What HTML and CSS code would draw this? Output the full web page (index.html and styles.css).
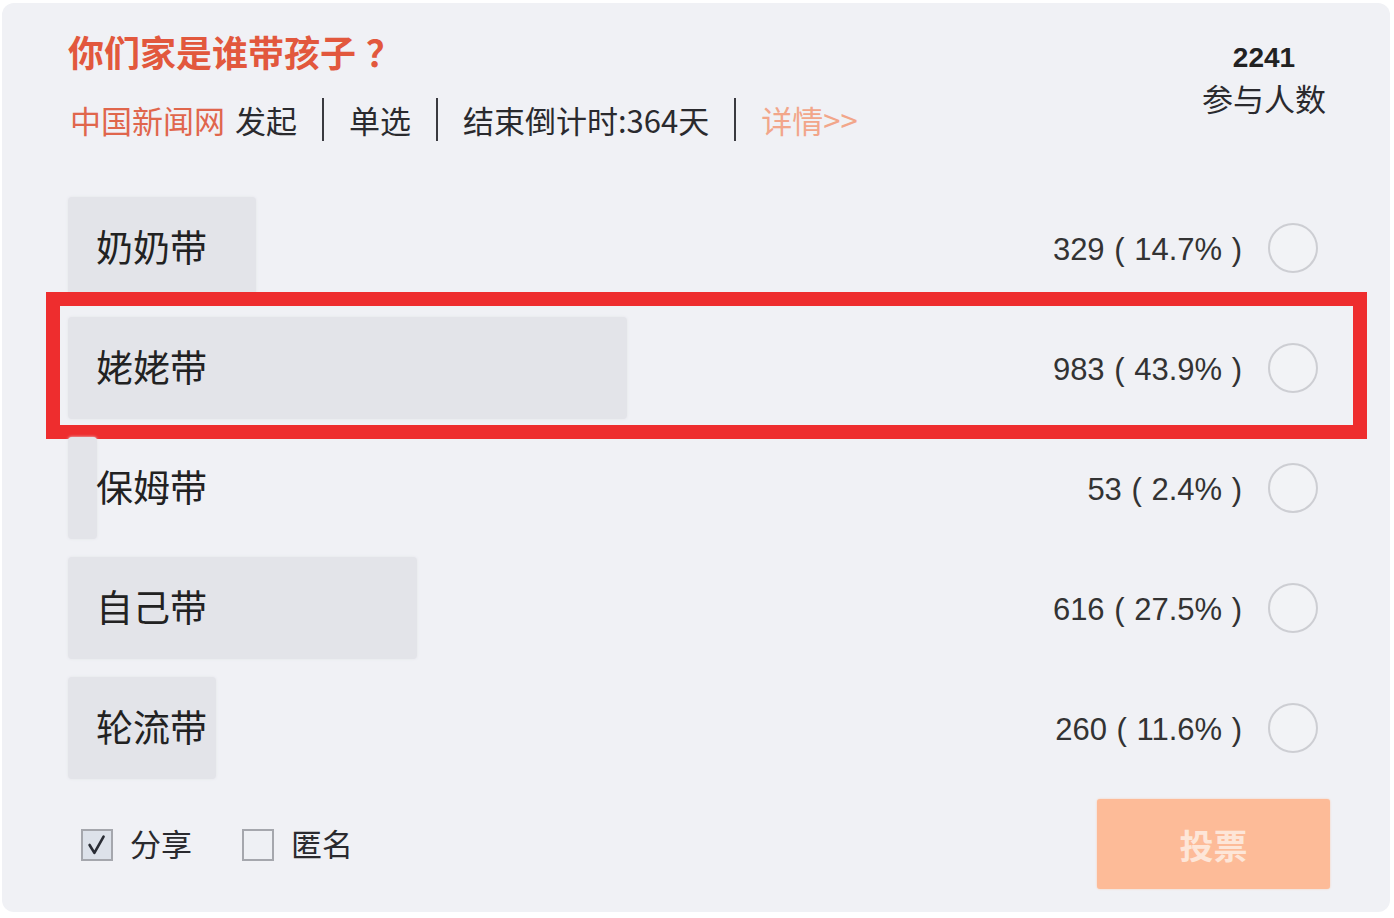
FILE: index.html
```html
<!DOCTYPE html>
<html lang="zh-CN">
<head>
<meta charset="utf-8">
<title>你们家是谁带孩子？</title>
<link rel="stylesheet" href="styles.css">
</head>
<body>
<div class="card">
  <header class="head">
    <div class="head-main">
      <h1 class="title">你们家是谁带孩子<span class="qmark">？</span></h1>
      <div class="meta">
        <span class="src">中国新闻网</span><span class="launch">发起</span>
        <span class="sep"></span>
        <span class="item">单选</span>
        <span class="sep"></span>
        <span class="item">结束倒计时:364天</span>
        <span class="sep"></span>
        <span class="more">详情&gt;&gt;</span>
      </div>
    </div>
    <div class="stats">
      <div class="count">2241</div>
      <div class="count-label">参与人数</div>
    </div>
  </header>

  <ul class="options">
    <li class="opt">
      <div class="bar" style="width:188px"></div>
      <span class="label">奶奶带</span>
      <span class="num">329 ( 14.7% )</span>
      <span class="radio"></span>
    </li>
    <li class="opt">
      <div class="bar" style="width:559px"></div>
      <span class="label">姥姥带</span>
      <span class="num">983 ( 43.9% )</span>
      <span class="radio"></span>
      <div class="mark"></div>
    </li>
    <li class="opt">
      <div class="bar" style="width:29px"></div>
      <span class="label">保姆带</span>
      <span class="num">53 ( 2.4% )</span>
      <span class="radio"></span>
    </li>
    <li class="opt">
      <div class="bar" style="width:349px"></div>
      <span class="label">自己带</span>
      <span class="num">616 ( 27.5% )</span>
      <span class="radio"></span>
    </li>
    <li class="opt">
      <div class="bar" style="width:148px"></div>
      <span class="label">轮流带</span>
      <span class="num">260 ( 11.6% )</span>
      <span class="radio"></span>
    </li>
  </ul>

  <footer class="foot">
    <label class="check">
      <span class="box checked">
        <svg viewBox="0 0 32 32" width="32" height="32"><path d="M7.5 16 L13 25 L23.5 6.5" fill="none" stroke="#2a2d35" stroke-width="3" stroke-linecap="round" stroke-linejoin="round"/></svg>
      </span>
      <span class="check-text">分享</span>
    </label>
    <label class="check">
      <span class="box"></span>
      <span class="check-text">匿名</span>
    </label>
    <button class="vote">投票</button>
  </footer>
</div>
</body>
</html>
```

FILE: styles.css
```css
* { box-sizing: border-box; }
html, body { margin: 0; padding: 0; }
body {
  background: #ffffff;
  width: 1394px;
  height: 918px;
  overflow: hidden;
  font-family: "Liberation Sans", "Noto Sans CJK SC", sans-serif;
  color: #222;
}
.card {
  margin: 3px 4px 6px 2px;
  height: 909px;
  background: #f0f1f5;
  border-radius: 12px;
  padding: 26px 72px 0 66px;
  display: flex;
  flex-direction: column;
}
.head {
  display: flex;
  justify-content: space-between;
  align-items: flex-start;
}
.head-main { display: flex; flex-direction: column; }
.title {
  margin: 0;
  font-size: 36px;
  line-height: 44px;
  font-weight: bold;
  color: #e2583d;
  font-family: "Noto Sans CJK SC", sans-serif;
}
.qmark {
  font-family: "Noto Sans CJK TC", "Noto Sans CJK SC", sans-serif;
  margin-left: 10px;
}
.meta {
  margin-top: 24px;
  display: flex;
  align-items: center;
  height: 44px;
  font-size: 31px;
  font-family: "Noto Sans CJK SC", sans-serif;
  color: #2a2a2e;
}
.src { color: #e0664c; margin-left: 2px; }
.launch { margin-left: 10px; }
.sep {
  width: 2px;
  height: 43px;
  background: #3a3a40;
  margin: 0 25px;
}
.more { color: #f2a68a; }
.stats {
  margin-top: 11px;
  margin-right: -11px;
  display: flex;
  flex-direction: column;
  align-items: center;
  width: 130px;
}
.count {
  font-size: 28px;
  line-height: 36px;
  font-weight: bold;
  color: #222;
  font-family: "Liberation Sans", sans-serif;
}
.count-label {
  font-size: 31px;
  line-height: 44px;
  color: #2a2a2e;
  font-family: "Noto Sans CJK SC", sans-serif;
}
.options {
  list-style: none;
  margin: 56px 0 0 0;
  padding: 0;
  display: flex;
  flex-direction: column;
  gap: 18px;
}
.opt {
  position: relative;
  height: 102px;
  display: flex;
  align-items: center;
  padding-left: 28px;
}
.bar {
  position: absolute;
  left: 0;
  top: 0;
  bottom: 0;
  background: #e3e4e9;
  border-radius: 4px;
  box-shadow: 0 0 3px #e3e4e9;
}
.label {
  position: relative;
  font-size: 37px;
  font-family: "Noto Sans CJK SC", sans-serif;
  color: #222;
  flex: 1;
  margin-top: -5px;
}
.num {
  position: relative;
  font-size: 31px;
  color: #333;
  margin-right: 26px;
  margin-top: 4px;
  word-spacing: 1px;
}
.radio {
  position: relative;
  width: 50px;
  height: 50px;
  border-radius: 50%;
  border: 2px solid #cdced3;
  background: #f2f3f6;
}
.mark {
  position: absolute;
  left: -22px;
  right: -49px;
  top: -25px;
  bottom: -20px;
  border: 14px solid #ee2d2e;
}
.foot {
  margin-top: 20px;
  display: flex;
  align-items: center;
  padding-left: 13px;
}
.check {
  display: flex;
  align-items: center;
  margin-right: 50px;
}
.box {
  width: 32px;
  height: 32px;
  border: 2px solid #a5a7ad;
  background: #eef0f4;
  display: flex;
  align-items: center;
  justify-content: center;
  margin-top: 2px;
}
.box.checked { background: #dde2ea; }
.box svg { display: block; width: 28px; height: 28px; }
.check-text {
  margin-left: 17px;
  margin-top: -4px;
  font-size: 31px;
  font-family: "Noto Sans CJK SC", sans-serif;
  color: #2a2a2e;
}
.vote {
  margin-left: auto;
  margin-right: -12px;
  width: 233px;
  height: 90px;
  border: none;
  border-radius: 3px;
  background: #fdbb98;
  color: #fde6d8;
  font-size: 34px;
  font-weight: bold;
  font-family: "Noto Sans CJK SC", sans-serif;
  box-shadow: 0 0 2px #fcc9ad;
}
```
